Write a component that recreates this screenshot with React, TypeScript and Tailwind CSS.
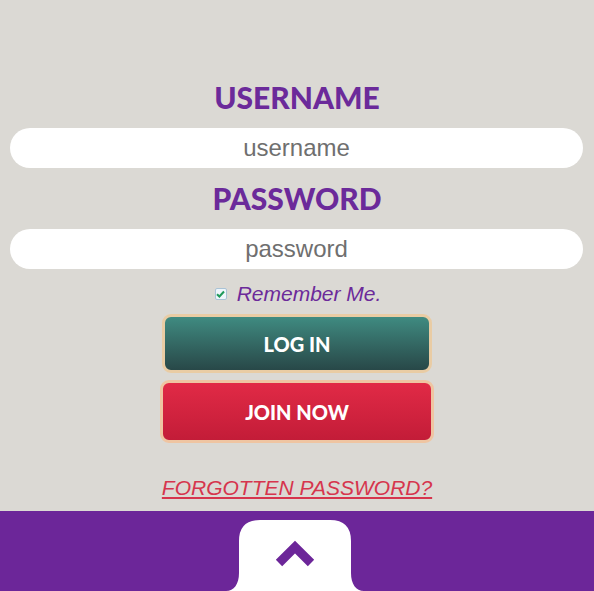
import { useState } from 'react';

function FooterTab() {
  return (
    <svg width="138" height="71" viewBox="0 0 138 71" className="block">
      <path
        d="M0 71 C 8 71, 13 64, 13 53 L 13 21 Q 13 0, 34 0 L 104 0 Q 125 0, 125 21 L 125 53 C 125 64, 130 71, 138 71 Z"
        fill="#ffffff"
      />
      <polyline
        points="53,43 69,27 85,43"
        fill="none"
        stroke="#6c2699"
        strokeWidth="9"
        strokeLinejoin="miter"
        strokeLinecap="butt"
      />
    </svg>
  );
}

function CheckBox({ checked, onToggle }: { checked: boolean; onToggle: () => void }) {
  return (
    <button
      type="button"
      onClick={onToggle}
      className="flex h-[12px] w-[12px] items-center justify-center rounded-[2px] border border-[#a9c3d6] bg-[#eef6fb]"
    >
      {checked && (
        <svg width="9" height="8" viewBox="0 0 9 8">
          <path d="M1 4.2 L3.4 6.5 L8 1.5" fill="none" stroke="#1f9a5a" strokeWidth="2" />
        </svg>
      )}
    </button>
  );
}

export default function App() {
  const [remember, setRemember] = useState(true);

  return (
    <div className="flex h-[591px] w-[594px] flex-col overflow-hidden bg-[#dbd9d4]">
      <div className="flex flex-1 flex-col items-center pt-[79px]">
        <h2 className="h-[36px] font-['Lato',sans-serif] text-[30px] font-black leading-[36px] text-[#6b2a9a]">
          USERNAME
        </h2>
        <input
          className="mt-[13px] ml-[10px] mr-[11px] h-[40px] w-[573px] self-start rounded-full bg-white text-center font-['Liberation_Sans',Arial,sans-serif] text-[24px] text-[#666] outline-none placeholder:text-[#6f6f6f]"
          placeholder="username"
        />
        <h2 className="mt-[12px] h-[36px] font-['Lato',sans-serif] text-[30px] font-black leading-[36px] text-[#6b2a9a]">
          PASSWORD
        </h2>
        <input
          type="password"
          className="mt-[13px] ml-[10px] mr-[11px] h-[40px] w-[573px] self-start rounded-full bg-white text-center font-['Liberation_Sans',Arial,sans-serif] text-[24px] text-[#666] outline-none placeholder:text-[#6f6f6f]"
          placeholder="password"
        />
        <label className="mt-[12px] flex h-[26px] items-center gap-[10px] pl-[2px]">
          <CheckBox checked={remember} onToggle={() => setRemember(!remember)} />
          <span className="font-['Liberation_Sans',Arial,sans-serif] text-[21px] italic leading-[26px] text-[#6b2a9a]">
            Remember Me.
          </span>
        </label>
        <button
          type="button"
          className="mt-[7px] flex h-[59px] w-[270px] items-center justify-center rounded-[9px] border-[3px] border-[#e9cca4] bg-gradient-to-b from-[#3f8b81] to-[#284848] font-['Lato',sans-serif] text-[20px] font-black text-white"
        >
          LOG IN
        </button>
        <button
          type="button"
          className="mt-[7px] flex h-[63px] w-[274px] items-center justify-center rounded-[9px] border-[3px] border-[#efc5a2] bg-gradient-to-b from-[#e12a46] to-[#c31c38] font-['Lato',sans-serif] text-[20px] font-black text-white"
        >
          JOIN NOW
        </button>
        <a
          href="#"
          className="mt-[33px] font-['Liberation_Sans',Arial,sans-serif] text-[21px] italic leading-[24px] text-[#d6354d] underline"
        >
          FORGOTTEN PASSWORD?
        </a>
      </div>
      <footer className="flex h-[80px] shrink-0 items-end justify-center bg-[#6c2699]">
        <div className="-ml-[4px]">
          <FooterTab />
        </div>
      </footer>
    </div>
  );
}
